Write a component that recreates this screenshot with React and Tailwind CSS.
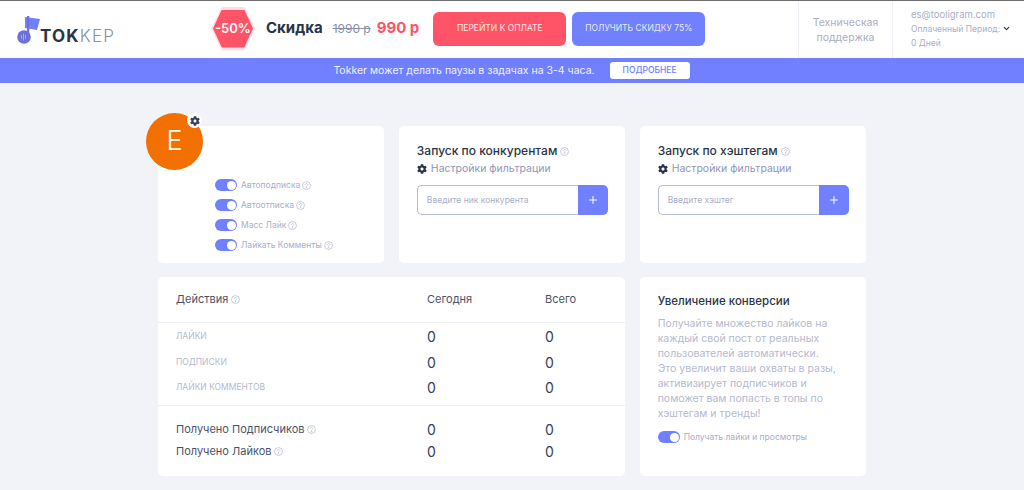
import { FaCog } from "react-icons/fa";
import { FiChevronDown, FiPlus } from "react-icons/fi";

function Help({ className = "" }) {
  return (
    <svg viewBox="0 0 16 16" className={`inline-block shrink-0 ${className}`} fill="none" stroke="#a9aec6" strokeWidth="1.1">
      <circle cx="8" cy="8" r="7" />
      <path d="M6 6.3a2 2 0 1 1 3.2 1.6c-.7.5-1.2.9-1.2 1.8" strokeLinecap="round" />
      <circle cx="8" cy="11.9" r=".5" fill="#a9aec6" />
    </svg>
  );
}

function Toggle() {
  return (
    <span className="flex h-[12px] w-[22px] shrink-0 items-center justify-end rounded-full bg-[#7080ff] pr-[1px]">
      <span className="h-[9px] w-[9px] rounded-full bg-white" />
    </span>
  );
}

function Logo() {
  return (
    <div className="flex items-end">
      <svg viewBox="0 0 24 30" className="mb-[16px] h-[30px] w-[24px]">
        <circle cx="8" cy="33" r="0" />
        <path d="M24 3 L39 5 L36 16 L24 14 Z" fill="#7080ff" transform="translate(-16 -1) scale(1)" />
        <path d="M12 1h2.2v21H12z" fill="#6d70d8" transform="translate(-3 0) translate(1 0)" />
        <circle cx="7" cy="22" r="6.8" fill="#6d70d8" />
        <path d="M4.5 20v4M6.5 18.5v7M8.5 20v4" stroke="#a5a8f0" strokeWidth="1" />
      </svg>
      <div className="mb-[16px] ml-[-1px] flex h-[16px] items-center text-[17px] leading-none tracking-[1.2px]">
        <span className="font-bold text-[#2b3346]">TOK</span>
        <span className="font-light text-[#8a8fa3]">KEP</span>
      </div>
    </div>
  );
}

function Badge() {
  return (
    <div className="flex h-[44px] w-[44px] items-center justify-center bg-[#fbdfe4] [clip-path:polygon(25%_0,75%_0,100%_50%,75%_100%,25%_100%,0_50%)]">
      <div className="flex h-[38px] w-[40px] items-center justify-center bg-[#ff5468] text-[13px] font-semibold text-white [clip-path:polygon(22%_0,78%_0,100%_50%,78%_100%,22%_100%,0_50%)]">
        -50%
      </div>
    </div>
  );
}

function Header() {
  return (
    <div className="flex h-[58px] border-t border-t-[#6e6e6e] bg-white">
      <div className="flex w-[211px] items-center pl-[17px] pt-[16px]">
        <Logo />
      </div>
      <div className="flex items-center pb-[2px]">
        <Badge />
        <span className="ml-[11px] text-[15px] font-bold text-[#2b3346]">Скидка</span>
        <span className="ml-[10px] text-[12px] text-[#8a8fa3] line-through">1990 р</span>
        <span className="ml-[6px] text-[15px] font-bold text-[#ff5468]">990 р</span>
        <button className="ml-[14px] h-[34px] w-[133px] rounded-[6px] bg-[#ff5468] text-[8.5px] text-[#ffe6e9]">ПЕРЕЙТИ К ОПЛАТЕ</button>
        <button className="ml-[6px] h-[34px] w-[133px] rounded-[6px] bg-[#7080ff] text-[8.5px] text-[#e6e9ff]">ПОЛУЧИТЬ СКИДКУ 75%</button>
      </div>
      <div className="ml-auto flex w-[94px] items-center justify-center border-l border-[#eceef4] text-center text-[10.5px] leading-[15px] text-[#a9aec6]">
        Техническая<br />поддержка
      </div>
      <div className="flex w-[132px] flex-col justify-center border-l border-[#eceef4] pb-[2px] pl-[18px] text-[#a9aec6]">
        <span className="text-[9.5px] leading-[14px]">es@tooligram.com</span>
        <span className="flex items-center text-[8.5px] leading-[14px]">
          Оплаченный Период:
          <FiChevronDown className="ml-[2px] text-[#2b3346]" size={9} strokeWidth={3} />
        </span>
        <span className="text-[8.5px] leading-[14px]">0 Дней</span>
      </div>
    </div>
  );
}

function Banner() {
  return (
    <div className="flex h-[25px] items-center justify-center bg-[#7080ff] pr-[1px]">
      <span className="text-[10.5px] text-[#edf0ff]">Tokker может делать паузы в задачах на 3-4 часа.</span>
      <button className="ml-[15px] h-[17px] w-[80px] rounded-[3px] bg-white text-[8.5px] font-medium text-[#7080ff]">ПОДРОБНЕЕ</button>
    </div>
  );
}

function Card({ className = "", children }) {
  return <div className={`rounded-[5px] bg-white ${className}`}>{children}</div>;
}

function ProfileCard() {
  const items = ["Автоподписка", "Автоотписка", "Масс Лайк", "Лайкать Комменты"];
  return (
    <Card className="relative pl-[57px] pt-[53px]">
      <div className="absolute left-[-12px] top-[-13px] flex h-[57px] w-[57px] items-center justify-center rounded-full bg-[#f27000] text-[27px] font-light text-white">
        E
      </div>
      <div className="absolute left-[29px] top-[-13px] flex h-[15px] w-[15px] items-center justify-center rounded-full bg-white">
        <FaCog className="text-[#33405a]" size={10} />
      </div>
      <div className="flex flex-col gap-[8px]">
        {items.map((item) => (
          <div key={item} className="flex h-[12px] items-center text-[8.5px] text-[#a9aec6]">
            <Toggle />
            <span className="ml-[4px]">{item}</span>
            <Help className="ml-[2px] h-[9px] w-[9px]" />
          </div>
        ))}
      </div>
    </Card>
  );
}

function SearchCard({ title, placeholder }) {
  return (
    <Card className="px-[18px] pt-[17px]">
      <div className="flex items-center text-[12px] font-medium leading-[16px] text-[#2b3346]">
        {title}
        <Help className="ml-[3px] h-[9px] w-[9px]" />
      </div>
      <div className="mt-[2px] flex h-[16px] items-center text-[10.5px] text-[#8f96b8]">
        <FaCog className="mr-[4px] text-[#2b3346]" size={10} />
        Настройки фильтрации
      </div>
      <div className="mt-[8px] flex h-[30px] w-[191px]">
        <div className="flex flex-1 items-center rounded-l-[5px] border border-r-0 border-[#b6bbd0] pl-[9px] text-[8.5px] text-[#a9aec6]">
          {placeholder}
        </div>
        <div className="flex w-[30px] items-center justify-center rounded-r-[5px] bg-[#7080ff]">
          <FiPlus className="text-white" size={12} strokeWidth={2} />
        </div>
      </div>
    </Card>
  );
}

function StatRow({ label, help, muted }) {
  return (
    <div className={`flex items-center pl-[18px] ${muted ? "h-[25.5px]" : "h-[22px]"}`}>
      <div className={`flex w-[251px] items-center ${muted ? "text-[8.5px] text-[#b4b9ce]" : "text-[11px] text-[#4b5268]"}`}>
        {label}
        {help && <Help className="ml-[3px] h-[9px] w-[9px]" />}
      </div>
      <div className="w-[118px] text-[14px] text-[#33405a]">0</div>
      <div className="text-[14px] text-[#33405a]">0</div>
    </div>
  );
}

function StatsCard() {
  return (
    <Card className="col-span-2">
      <div className="flex h-[46px] items-center border-b border-[#eceef4] pl-[18px] pb-[1px] text-[11px] text-[#4b5268]">
        <div className="flex w-[251px] items-center">
          Действия
          <Help className="ml-[3px] h-[9px] w-[9px]" />
        </div>
        <div className="w-[118px]">Сегодня</div>
        <div>Всего</div>
      </div>
      <div className="flex flex-col border-b border-[#eceef4] pb-[4px] pt-[1px]">
        <StatRow label="ЛАЙКИ" muted />
        <StatRow label="ПОДПИСКИ" muted />
        <StatRow label="ЛАЙКИ КОММЕНТОВ" muted />
      </div>
      <div className="pt-[13px]">
        <StatRow label="Получено Подписчиков" help />
        <StatRow label="Получено Лайков" help />
      </div>
    </Card>
  );
}

function ConversionCard() {
  return (
    <Card className="px-[18px] pt-[17px]">
      <div className="text-[11.5px] font-medium leading-[14px] text-[#2b3346]">Увеличение конверсии</div>
      <p className="mt-[8px] text-[10.5px] leading-[15px] text-[#b4b9ce]">
        Получайте множество лайков на каждый свой пост от реальных пользователей автоматически.
        <br />
        Это увеличит ваши охваты в разы, активизирует подписчиков и поможет вам попасть в топы по хэштегам и тренды!
      </p>
      <div className="mt-[10px] flex items-center text-[8.5px] text-[#a9aec6]">
        <Toggle />
        <span className="ml-[4px]">Получать лайки и просмотры</span>
      </div>
    </Card>
  );
}

export default function App() {
  return (
    <div className="h-[490px] overflow-hidden bg-[#f1f3f8] font-['Inter',sans-serif]">
      <Header />
      <Banner />
      <div className="mx-auto mt-[43px] grid w-[708px] grid-cols-3 grid-rows-[137px_199px] gap-x-[14.5px] gap-y-[14px] ml-[158px]">
        <ProfileCard />
        <SearchCard title="Запуск по конкурентам" placeholder="Введите ник конкурента" />
        <SearchCard title="Запуск по хэштегам" placeholder="Введите хэштег" />
        <StatsCard />
        <ConversionCard />
      </div>
    </div>
  );
}
